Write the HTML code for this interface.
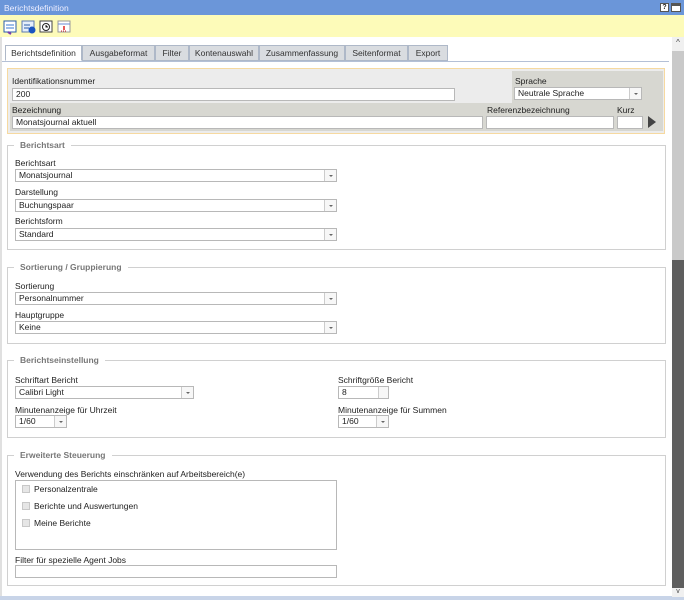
<!DOCTYPE html><html><head><meta charset="utf-8"><style>
*{box-sizing:border-box;margin:0;padding:0}
body{width:684px;height:600px;overflow:hidden;background:#fff;font-family:"Liberation Sans",sans-serif;font-size:8.5px;color:#222;position:relative}
.a{position:absolute}
.t{position:absolute;white-space:nowrap;line-height:10px}
.in{position:absolute;background:#fff;border:1px solid #b8b8b8;height:13px;line-height:11px;padding-left:3px;white-space:nowrap}
.sel::after{content:"";position:absolute;right:0;top:0;width:11px;height:11px;border-left:1px solid #ccc;background:#f7f7f7}
.sel::before{content:"";position:absolute;right:3px;top:5px;border:2px solid transparent;border-top:2px solid #666;z-index:2}
.fs{position:absolute;border:1px solid #d0d0d0;left:7px;width:659px}
.lg{position:absolute;background:#fff;color:#777;font-weight:bold;padding:0 6px;left:6px;top:-6px;line-height:10px}
.tab{position:absolute;top:45px;height:16px;border:1px solid #aeb8c8;background:#d9dce0;text-align:center;line-height:15px;color:#333}
.cb{position:absolute;width:8px;height:8px;border:1px solid #c8c8c8;background:#e6e6e6}
</style></head><body>
<div class="a" style="left:0;top:0;width:684px;height:15px;background:#6b96d9"></div>
<div class="t" style="left:4px;top:3px;color:#eef;font-size:8.5px">Berichtsdefinition</div>
<div class="a" style="left:660px;top:3px;width:9px;height:9px;background:#fff;border:1px solid #555;font-size:7px;line-height:7px;text-align:center;font-weight:bold">?</div>
<div class="a" style="left:671px;top:3px;width:10px;height:9px;background:#fff;border:1px solid #555;border-top:3px solid #555"></div>
<div class="a" style="left:0;top:15px;width:684px;height:22px;background:#fdfbb9"></div>
<svg class="a" style="left:3px;top:19px" width="72" height="16">
<rect x="1" y="2" width="12" height="11" fill="#fff" stroke="#2a5ca8"/><path d="M3 6h8M3 9h8" stroke="#3a7ad0"/><path d="M5 13l3 2" stroke="#7a3cb0" stroke-width="2"/>
<rect x="19" y="2" width="12" height="11" fill="#e4eefa" stroke="#5a7ab0"/><path d="M21 6h6M21 9h5" stroke="#2a5ca8"/><circle cx="29" cy="11" r="3.5" fill="#1a55c0"/>
<rect x="37" y="2" width="12" height="11" fill="#fff" stroke="#444"/><circle cx="43" cy="8" r="3.5" fill="none" stroke="#222"/><path d="M43 6v2h2" stroke="#222"/>
<rect x="55" y="2" width="12" height="11" fill="#fff" stroke="#999"/><path d="M55 5h12" stroke="#6a8ad0"/><path d="M61 7v4" stroke="#d22" stroke-width="1.5"/><path d="M58 12h6" stroke="#d22" stroke-dasharray="1 1"/>
</svg>
<div class="a" style="left:0;top:37px;width:2px;height:561px;background:#e0e0e0"></div>
<div class="a" style="left:0;top:596px;width:684px;height:4px;background:#c8d4e8"></div>
<div class="a" style="left:672px;top:37px;width:12px;height:14px;background:#f0f0f0;text-align:center;font-size:8px;color:#444;line-height:12px">^</div>
<div class="a" style="left:672px;top:51px;width:12px;height:209px;background:#c9c9c9"></div>
<div class="a" style="left:672px;top:260px;width:12px;height:328px;background:#5e5e5e"></div>
<div class="a" style="left:672px;top:588px;width:12px;height:9px;background:#f0f0f0;text-align:center;font-size:7px;color:#444;line-height:8px">v</div>
<div class="a" style="left:2px;top:61px;width:667px;height:1px;background:#b4c0d6"></div>
<div class="tab" style="left:5px;width:77px;background:#fff;border-bottom-color:#fff">Berichtsdefinition</div>
<div class="tab" style="left:82px;width:73px">Ausgabeformat</div>
<div class="tab" style="left:155px;width:34px">Filter</div>
<div class="tab" style="left:189px;width:70px">Kontenauswahl</div>
<div class="tab" style="left:259px;width:86px">Zusammenfassung</div>
<div class="tab" style="left:345px;width:63px">Seitenformat</div>
<div class="tab" style="left:408px;width:40px">Export</div>
<div class="a" style="left:7px;top:68px;width:658px;height:66px;border:1px solid #f6d9a0;background:#ececec"></div>
<div class="a" style="left:10px;top:103px;width:503px;height:28px;background:#d7d7d1"></div>
<div class="a" style="left:512px;top:71px;width:151px;height:60px;background:#d7d7d1"></div>
<div class="t" style="left:12px;top:76px">Identifikationsnummer</div>
<div class="in" style="left:12px;top:88px;width:443px">200</div>
<div class="t" style="left:515px;top:76px">Sprache</div>
<div class="in sel" style="left:514px;top:87px;width:128px">Neutrale Sprache</div>
<div class="t" style="left:12px;top:105px">Bezeichnung</div>
<div class="in" style="left:12px;top:116px;width:471px">Monatsjournal aktuell</div>
<div class="t" style="left:487px;top:105px">Referenzbezeichnung</div>
<div class="in" style="left:486px;top:116px;width:128px"></div>
<div class="t" style="left:617px;top:105px">Kurz</div>
<div class="in" style="left:617px;top:116px;width:26px"></div>
<div class="a" style="left:648px;top:116px;border-left:8px solid #444;border-top:6px solid transparent;border-bottom:6px solid transparent"></div>

<div class="fs" style="top:145px;height:105px"><div class="lg">Berichtsart</div></div>
<div class="t" style="left:15px;top:158px">Berichtsart</div>
<div class="in sel" style="left:15px;top:169px;width:322px">Monatsjournal</div>
<div class="t" style="left:15px;top:187px">Darstellung</div>
<div class="in sel" style="left:15px;top:199px;width:322px">Buchungspaar</div>
<div class="t" style="left:15px;top:216px">Berichtsform</div>
<div class="in sel" style="left:15px;top:228px;width:322px">Standard</div>

<div class="fs" style="top:267px;height:77px"><div class="lg">Sortierung / Gruppierung</div></div>
<div class="t" style="left:15px;top:281px">Sortierung</div>
<div class="in sel" style="left:15px;top:292px;width:322px">Personalnummer</div>
<div class="t" style="left:15px;top:310px">Hauptgruppe</div>
<div class="in sel" style="left:15px;top:321px;width:322px">Keine</div>

<div class="fs" style="top:360px;height:78px"><div class="lg">Berichtseinstellung</div></div>
<div class="t" style="left:15px;top:375px">Schriftart Bericht</div>
<div class="in sel" style="left:15px;top:386px;width:179px">Calibri Light</div>
<div class="t" style="left:338px;top:375px">Schriftgröße Bericht</div>
<div class="in" style="left:338px;top:386px;width:51px">8<span style="position:absolute;right:0;top:0;width:10px;height:11px;border-left:1px solid #ccc;background:#f7f7f7"></span></div>
<div class="t" style="left:15px;top:405px">Minutenanzeige für Uhrzeit</div>
<div class="in sel" style="left:15px;top:415px;width:52px">1/60</div>
<div class="t" style="left:338px;top:405px">Minutenanzeige für Summen</div>
<div class="in sel" style="left:338px;top:415px;width:51px">1/60</div>

<div class="fs" style="top:455px;height:131px"><div class="lg">Erweiterte Steuerung</div></div>
<div class="t" style="left:15px;top:469px">Verwendung des Berichts einschränken auf Arbeitsbereich(e)</div>
<div class="a" style="left:15px;top:480px;width:322px;height:70px;border:1px solid #b8b8b8"></div>
<div class="cb" style="left:22px;top:485px"></div><div class="t" style="left:34px;top:484px">Personalzentrale</div>
<div class="cb" style="left:22px;top:502px"></div><div class="t" style="left:34px;top:501px">Berichte und Auswertungen</div>
<div class="cb" style="left:22px;top:519px"></div><div class="t" style="left:34px;top:518px">Meine Berichte</div>
<div class="t" style="left:15px;top:555px">Filter für spezielle Agent Jobs</div>
<div class="in" style="left:15px;top:565px;width:322px"></div>
</body></html>
